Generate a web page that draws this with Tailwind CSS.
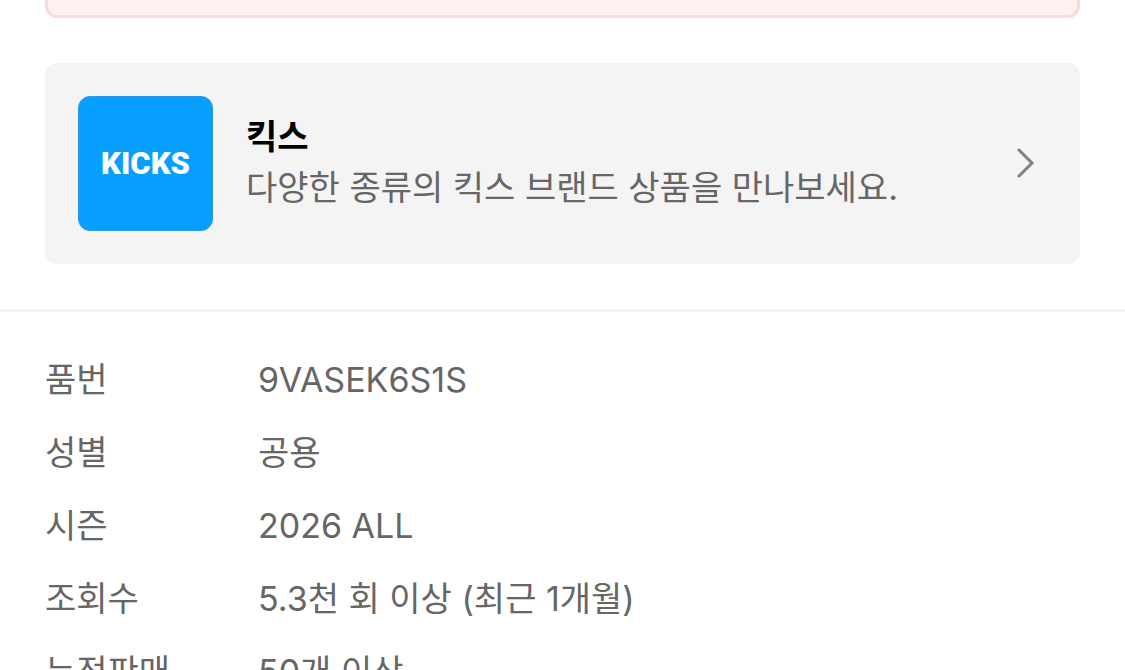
<!DOCTYPE html>
<html lang="ko">
<head>
<meta charset="utf-8">
<meta name="viewport" content="width=device-width, initial-scale=1">
<title>킥스</title>
<script src="https://cdn.jsdelivr.net/npm/@tailwindcss/browser@4"></script>
</head>
<body class="bg-white">
<main class="h-screen overflow-hidden font-['Inter','Noto_Sans_CJK_KR',sans-serif] text-[34px] leading-[51px] text-[#666666]">
  <section class="px-[45px] pb-[45px]">
    <div class="h-[18px] rounded-b-xl border-x-3 border-b-3 border-[#fadadd] bg-[#fff1f0]"></div>
    <a href="#" class="mt-[45px] flex items-center rounded-xl bg-[#f4f4f4] py-[33px] pr-[45px] pl-[33px]">
      <span class="flex size-[135px] shrink-0 items-center justify-center rounded-xl border border-[#2c98ea] bg-[#079ffd] font-['Roboto',sans-serif] text-[31px] font-black text-white">KICKS</span>
      <span class="ml-[33px] min-w-0 flex-1 pb-1">
        <strong class="block font-semibold text-black">킥스</strong>
        <span class="block">다양한 종류의 킥스 브랜드 상품을 만나보세요.</span>
      </span>
      <svg class="mb-[2px] h-[30px] w-[20px] shrink-0" viewBox="0 0 20 30" fill="none" stroke="#808080" stroke-width="3" stroke-linecap="round" aria-hidden="true"><path d="M4 2 17 15 4 28"/></svg>
    </a>
  </section>
  <dl class="grid grid-cols-[213px_1fr] gap-y-[22px] border-t-3 border-[#f4f4f4] px-[45px] pt-[42px]">
    <dt>품번</dt><dd>9VASEK6S1S</dd>
    <dt>성별</dt><dd>공용</dd>
    <dt>시즌</dt><dd>2026 ALL</dd>
    <dt>조회수</dt><dd>5.3천 회 이상 (최근 1개월)</dd>
    <dt>누적판매</dt><dd>50개 이상</dd>
  </dl>
</main>
</body>
</html>
